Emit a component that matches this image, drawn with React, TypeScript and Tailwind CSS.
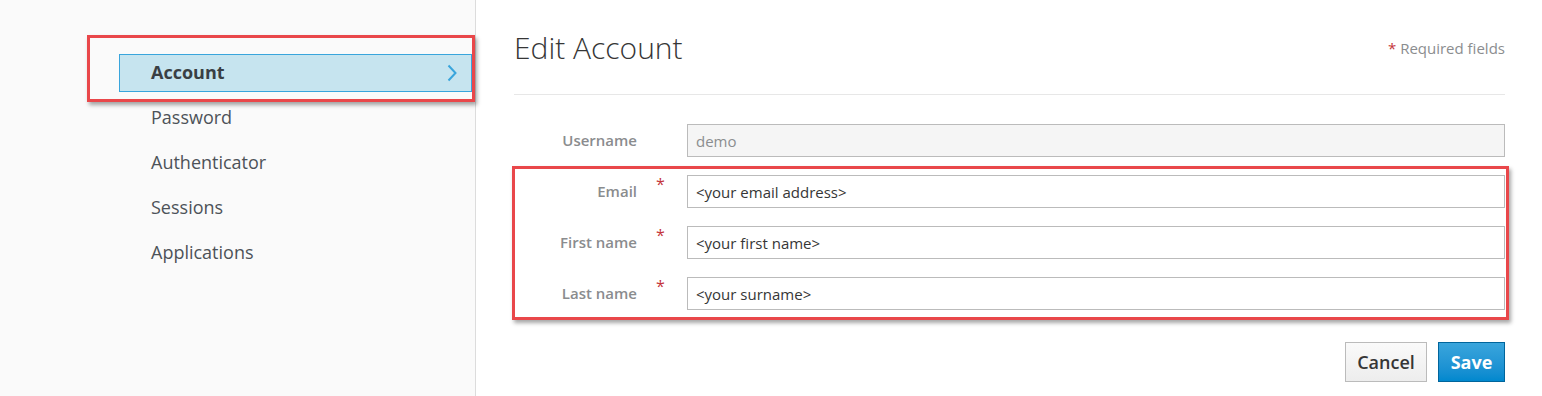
import React from 'react'

const navItems = ['Account', 'Password', 'Authenticator', 'Sessions', 'Applications']

const fields = [
  { label: 'Email', value: '<your email address>' },
  { label: 'First name', value: '<your first name>' },
  { label: 'Last name', value: '<your surname>' },
]

// red annotation frame drawn over the screenshot
function Highlight({ className }: { className: string }) {
  return (
    <div
      className={`pointer-events-none absolute border-[3px] border-[#e9474a] shadow-[2px_3px_4px_rgba(0,0,0,0.35)] ${className}`}
    />
  )
}

function FieldRow({ label, value, required, disabled }: { label: string; value: string; required?: boolean; disabled?: boolean }) {
  return (
    <div className="flex items-center">
      <label className="w-[123px] text-right text-[15px] font-semibold text-[#8a8c8e]">{label}</label>
      <div className="w-[50px] pl-[19px] self-start pt-[1px] text-[16px] leading-[16px] text-[#c4353a]">{required ? '*' : ''}</div>
      <input
        readOnly
        value={value}
        className={`h-[33px] flex-1 border border-[#bbbbbb] px-[8px] text-[15px] outline-none ${
          disabled ? 'bg-[#f5f5f5] text-[#8b8d8f]' : 'bg-white text-[#363636]'
        }`}
      />
    </div>
  )
}

export default function App() {
  return (
    <div className="flex h-[396px] w-full bg-white font-['Open_Sans',sans-serif]">
      {/* Sidebar */}
      <aside className="relative w-[476px] shrink-0 border-r border-[#dcdcdc] bg-[#fafafa] pt-[50px] pl-[119px] pr-[3px]">
        <ul>
          {navItems.map((item) =>
            item === 'Account' ? (
              <li key={item} className="flex h-[45px] items-center">
                <div className="flex h-[38px] w-full items-center justify-between border border-[#39a5dc] bg-[#c6e4ef] pl-[31px] pr-[13px]">
                  <span className="text-[18px] font-bold text-[#393f44]">Account</span>
                  <svg width="12" height="18" viewBox="0 0 12 18" fill="none" stroke="#39a5dc" strokeWidth="2">
                    <polyline points="2.5,1.5 9.5,9 2.5,16.5" />
                  </svg>
                </div>
              </li>
            ) : (
              <li key={item} className="flex h-[45px] items-center pl-[32px] text-[18px] text-[#4d5258]">
                {item}
              </li>
            )
          )}
        </ul>
        <Highlight className="left-[87px] top-[35px] h-[67px] w-[388px]" />
      </aside>

      {/* Main */}
      <main className="flex-1 pl-[38px] pr-[37px]">
        <div className="flex h-[95px] items-start justify-between border-b border-[#e7e7e7] pt-[28px]">
          <h1 className="text-[30px] font-light leading-[40px] text-[#363636]">Edit Account</h1>
          <span className="mt-[10px] text-[15px] leading-[20px] text-[#8b8d8f]">
            <span className="text-[#c4353a]">*</span> Required fields
          </span>
        </div>

        <form className="flex flex-col gap-[18px] pt-[29px]">
          <FieldRow label="Username" value="demo" disabled />
          <div className="relative flex flex-col gap-[18px]">
            {fields.map((f) => (
              <FieldRow key={f.label} label={f.label} value={f.value} required />
            ))}
            <Highlight className="-left-[2px] -top-[9px] -right-[4px] -bottom-[10px]" />
          </div>
        </form>

        <div className="mt-[32px] flex justify-end gap-[11px]">
          <button className="h-[40px] w-[82px] border border-[#bbbbbb] bg-gradient-to-b from-[#fafafa] to-[#ededed] text-[18px] font-semibold text-[#363636]">
            Cancel
          </button>
          <button className="h-[40px] w-[67px] border border-[#00659c] bg-gradient-to-b from-[#39a5dc] to-[#0088ce] text-[18px] font-bold text-white">
            Save
          </button>
        </div>
      </main>
    </div>
  )
}
